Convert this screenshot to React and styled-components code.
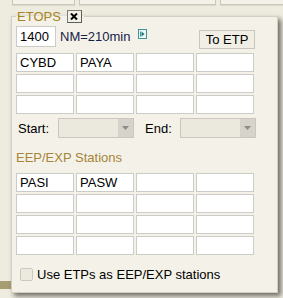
import React from "react";
import styled, { createGlobalStyle } from "styled-components";

const Global = createGlobalStyle`
  html, body { margin: 0; padding: 0; }
  body {
    background: #eeebdf;
    font-family: "Liberation Sans", Arial, sans-serif;
    font-size: 13px;
    color: #000;
    width: 283px;
    height: 298px;
    overflow: hidden;
  }
`;

const Page = styled.div`
  display: flex;
  flex-direction: column;
  width: 283px;
  height: 298px;
`;

const TopStrip = styled.div`
  display: flex;
  gap: 4px;
  height: 5px;
  padding-left: 12px;
`;

const StripCell = styled.div`
  box-sizing: border-box;
  height: 5px;
  width: ${(p) => (p.$w ? `${p.$w}px` : "auto")};
  flex: ${(p) => (p.$w ? "none" : "1")};
  background: #f3f1e8;
  border: 1px solid #cac7bb;
  border-top: none;
  border-right: ${(p) => (p.$open ? "none" : "1px solid #cac7bb")};
  box-shadow: 0 1px 1px rgba(0, 0, 0, 0.08);
`;

const Main = styled.div`
  display: flex;
  align-items: flex-start;
`;

const Gutter = styled.div`
  width: 11px;
  align-self: stretch;
  display: flex;
  flex-direction: column;
  justify-content: flex-end;
`;

const GutterBar = styled.div`
  height: 8px;
  margin-bottom: 4px;
  background: #a69d73;
`;

const Panel = styled.fieldset`
  box-sizing: border-box;
  width: 265px;
  margin: 4px 0 0 0;
  padding: 2px 21px 10px 4px;
  border: 1px solid #d2cfc5;
  background: #f4f2e8;
  box-shadow: 3px 3px 5px rgba(0, 0, 0, 0.55);
  display: flex;
  flex-direction: column;
`;

const Legend = styled.legend`
  display: flex;
  align-items: center;
  height: 15px;
  padding: 0 2px 0 1px;
  color: #a88326;
  font-size: 13px;
  line-height: 15px;
`;

const CloseBtn = styled.button`
  box-sizing: border-box;
  width: 15px;
  height: 13px;
  margin-left: 6px;
  padding: 0;
  display: flex;
  align-items: center;
  justify-content: center;
  background: #f1efe6;
  border: 1px solid #7c7c78;
  border-right-color: #5e5e5a;
  border-bottom-color: #5e5e5a;
`;

const TopRow = styled.div`
  display: flex;
  align-items: flex-start;
  height: 23px;
`;

const NumInput = styled.input`
  box-sizing: border-box;
  width: 40px;
  height: 21px;
  padding: 0 0 0 3px;
  border: 1px solid #cbcbc8;
  background: #fff;
  font: 13px "Liberation Sans", Arial, sans-serif;
  color: #000;
  outline: none;
`;

const Info = styled.span`
  margin-left: 4px;
  line-height: 21px;
  color: #14214a;
`;

const InfoIcon = styled.svg`
  margin: 3px 0 0 8px;
  display: block;
`;

const Button = styled.button`
  box-sizing: border-box;
  margin: 4px 1px 0 auto;
  width: 56px;
  height: 19px;
  padding: 0;
  border: 1px solid #c9c7bd;
  background: #f1efe5;
  font: 13px "Liberation Sans", Arial, sans-serif;
  color: #000;
`;

const Grid = styled.div`
  display: grid;
  grid-template-columns: repeat(4, 58px);
  grid-auto-rows: 19px;
  gap: 2px;
  margin-top: ${(p) => p.$mt}px;
`;

const Cell = styled.input`
  box-sizing: border-box;
  width: 58px;
  height: 19px;
  padding: 0 0 0 3px;
  border: 1px solid #cbcbc8;
  background: #fff;
  font: 13px "Liberation Sans", Arial, sans-serif;
  color: #000;
  outline: none;
`;

const RangeRow = styled.div`
  display: flex;
  align-items: center;
  margin-top: 4px;
  height: 20px;
`;

const Label = styled.span`
  margin-left: ${(p) => p.$ml}px;
  width: ${(p) => p.$w}px;
  flex: none;
`;

const SelectBox = styled.div`
  box-sizing: border-box;
  display: flex;
  width: 76px;
  height: 20px;
  border: 1px solid #cac8be;
  background: #ebe9dd;
`;

const SelectField = styled.select`
  flex: 1;
  min-width: 0;
  border: none;
  background: transparent;
  appearance: none;
  outline: none;
`;

const Arrow = styled.div`
  width: 15px;
  background: #d6d4ca;
  display: flex;
  align-items: center;
  justify-content: center;
`;

const SectionTitle = styled.div`
  margin-top: 12px;
  line-height: 15px;
  color: #a6843a;
`;

const CheckRow = styled.label`
  display: flex;
  align-items: center;
  margin-top: 12px;
  line-height: 15px;
  color: #000;
`;

const Check = styled.input`
  appearance: none;
  box-sizing: border-box;
  width: 13px;
  height: 13px;
  margin: 0 4px 0 4px;
  border: 1px solid #cbc9bf;
  border-radius: 2px;
  background: #ece9df;
`;

const etpRows = [
  ["CYBD", "PAYA", "", ""],
  ["", "", "", ""],
  ["", "", "", ""],
];

const eepRows = [
  ["PASI", "PASW", "", ""],
  ["", "", "", ""],
  ["", "", "", ""],
  ["", "", "", ""],
];

function CellGrid({ rows, mt }) {
  return (
    <Grid $mt={mt}>
      {rows.flat().map((v, i) => (
        <Cell key={i} defaultValue={v} />
      ))}
    </Grid>
  );
}

function DisabledSelect() {
  return (
    <SelectBox>
      <SelectField disabled />
      <Arrow>
        <svg width="7" height="4" viewBox="0 0 7 4">
          <path d="M0 0 H7 L3.5 4 Z" fill="#8c8c88" />
        </svg>
      </Arrow>
    </SelectBox>
  );
}

export default function App() {
  return (
    <Page>
      <Global />
      <TopStrip>
        <StripCell $w={63} />
        <StripCell $w={137} />
        <StripCell $open />
      </TopStrip>
      <Main>
        <Gutter>
          <GutterBar />
        </Gutter>
        <Panel>
          <Legend>
            ETOPS
            <CloseBtn aria-label="close">
              <svg width="8" height="7" viewBox="0 0 8 7">
                <path d="M1 0.5 L7 6.5 M7 0.5 L1 6.5" stroke="#000" strokeWidth="2" />
              </svg>
            </CloseBtn>
          </Legend>
          <TopRow>
            <NumInput defaultValue="1400" />
            <Info>NM=210min</Info>
            <InfoIcon width="9" height="10" viewBox="0 0 9 10">
              <rect x="0.5" y="0.5" width="8" height="9" fill="#eef6f6" stroke="#3a9696" />
              <path d="M2.5 2.5 V7.5" stroke="#3a9696" />
              <path d="M3.5 2.5 L6.5 5 L3.5 7.5 Z" fill="#1f7272" />
            </InfoIcon>
            <Button>To ETP</Button>
          </TopRow>
          <CellGrid rows={etpRows} mt={4} />
          <RangeRow>
            <Label $ml={2} $w={40}>Start:</Label>
            <DisabledSelect />
            <Label $ml={11} $w={35}>End:</Label>
            <DisabledSelect />
          </RangeRow>
          <SectionTitle>EEP/EXP Stations</SectionTitle>
          <CellGrid rows={eepRows} mt={8} />
          <CheckRow>
            <Check type="checkbox" disabled />
            Use ETPs as EEP/EXP stations
          </CheckRow>
        </Panel>
      </Main>
    </Page>
  );
}
